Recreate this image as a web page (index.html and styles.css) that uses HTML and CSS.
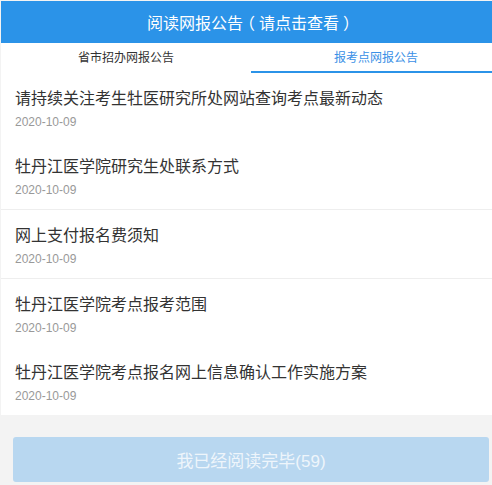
FILE: index.html
```html
<!DOCTYPE html>
<html lang="zh-CN">
<head>
<meta charset="utf-8">
<title>阅读网报公告</title>
<link rel="stylesheet" href="styles.css">
</head>
<body>
<div class="page">
  <header class="header">阅读网报公告<span class="paren">（</span>请点击查看<span class="paren">）</span></header>
  <nav class="tabs">
    <div class="tab">省市招办网报公告</div>
    <div class="tab active">报考点网报公告</div>
  </nav>
  <ul class="list">
    <li class="item">
      <div class="title">请持续关注考生牡医研究所处网站查询考点最新动态</div>
      <div class="date">2020-10-09</div>
    </li>
    <li class="item line">
      <div class="title">牡丹江医学院研究生处联系方式</div>
      <div class="date">2020-10-09</div>
    </li>
    <li class="item line">
      <div class="title">网上支付报名费须知</div>
      <div class="date">2020-10-09</div>
    </li>
    <li class="item">
      <div class="title">牡丹江医学院考点报考范围</div>
      <div class="date">2020-10-09</div>
    </li>
    <li class="item">
      <div class="title">牡丹江医学院考点报名网上信息确认工作实施方案</div>
      <div class="date">2020-10-09</div>
    </li>
  </ul>
  <div class="footer">
    <button class="btn" disabled>我已经阅读完毕(59)</button>
  </div>
</div>
</body>
</html>
```

FILE: styles.css
```css
html, body {
  margin: 0;
  padding: 0;
  overflow: hidden;
  background: #f3f3f3;
}
body {
  font-family: "Liberation Sans", "Noto Sans CJK SC", sans-serif;
  color: #333;
}
.page {
  width: 500px;
  margin: 1px 0 0 1px;
  background: #f3f3f3;
}
.header {
  height: 42px;
  line-height: 42px;
  background: #2b93e8;
  color: #fff;
  font-size: 16px;
  text-align: center;
  font-family: "Noto Sans CJK SC", sans-serif;
}
.paren {
  display: inline-block;
  width: 16px;
  text-align: center;
  font-feature-settings: "halt" 1;
}
.tabs {
  display: flex;
  background: #fff;
  height: 30px;
}
.tab {
  flex: 1;
  box-sizing: border-box;
  height: 30px;
  line-height: 28px;
  text-align: center;
  font-size: 12px;
  color: #333;
  font-family: "Noto Sans CJK SC", sans-serif;
  border-bottom: 2px solid transparent;
}
.tab.active {
  color: #3a90e6;
  border-bottom-color: #2b93e8;
}
.list {
  list-style: none;
  margin: 0;
  padding: 0;
  background: #fff;
}
.item {
  padding: 12px 14px 9px;
}
.item.line {
  border-bottom: 1px solid #eeeeee;
}
.title {
  font-size: 16px;
  line-height: 24px;
  color: #333;
  font-family: "Noto Sans CJK SC", sans-serif;
}
.date {
  margin-top: 3px;
  font-size: 12px;
  line-height: 20px;
  color: #999;
}
.footer {
  padding: 22px 12px 10px;
}
.btn {
  display: block;
  width: 100%;
  height: 45px;
  border: 0;
  border-radius: 3px;
  background: #b8d7f0;
  color: #eef5fb;
  font-family: "Liberation Sans", "Noto Sans CJK SC", sans-serif;
  font-size: 17px;
  padding: 0;
}
```
